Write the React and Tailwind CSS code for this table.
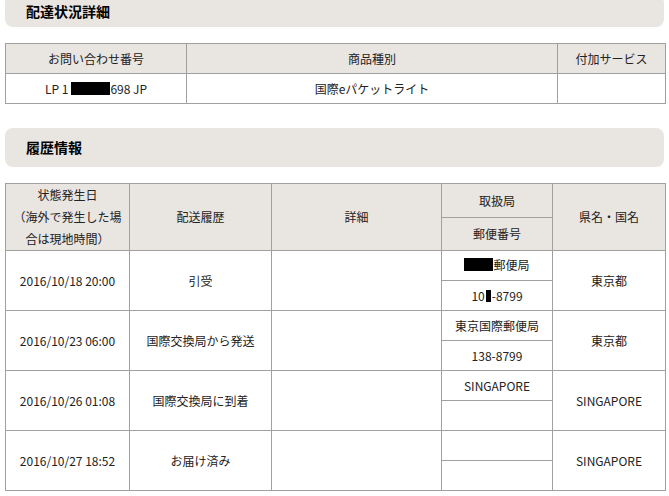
import React from 'react'

const FONT = { fontFamily: '"Noto Sans CJK JP", "Noto Sans", sans-serif' }

const HISTORY = [
  { date: '2016/10/18 20:00', status: '引受', office: 'redacted', zip: 'redacted', pref: '東京都' },
  { date: '2016/10/23 06:00', status: '国際交換局から発送', office: '東京国際郵便局', zip: '138-8799', pref: '東京都' },
  { date: '2016/10/26 01:08', status: '国際交換局に到着', office: 'SINGAPORE', zip: '', pref: 'SINGAPORE' },
  { date: '2016/10/27 18:52', status: 'お届け済み', office: '', zip: '', pref: 'SINGAPORE' },
]

function SectionTitle({ children, className = '' }) {
  return (
    <div className={`mx-[5px] rounded-[8px] bg-[#e9e5e1] flex items-center pl-[21px] text-[14px] font-bold text-black ${className}`}>
      {children}
    </div>
  )
}

const cell = 'border border-[#a0a0a0] text-center align-middle p-0'
const head = `${cell} bg-[#e9e5e1]`

function Office({ value }) {
  if (value === 'redacted') {
    return (
      <span className="inline-flex items-center">
        <span className="inline-block w-[29px] h-[13px] bg-black" />
        郵便局
      </span>
    )
  }
  return value
}

function Zip({ value }) {
  if (value === 'redacted') {
    return (
      <span className="inline-flex items-center">
        10<span className="inline-block w-[5px] h-[12px] bg-black mx-[1px]" />-8799
      </span>
    )
  }
  return value
}

export default function App() {
  return (
    <div className="w-[669px] h-[496px] overflow-hidden bg-white text-[12px] text-[#222]" style={FONT}>
      <SectionTitle className="-mt-[5px] h-[32px]">配達状況詳細</SectionTitle>

      {/* 配達状況詳細 */}
      <table className="mt-[16px] ml-[5px] border-collapse table-fixed w-[660px]">
        <colgroup>
          <col className="w-[181px]" />
          <col className="w-[371px]" />
          <col className="w-[108px]" />
        </colgroup>
        <tbody>
          <tr className="h-[30px]">
            <td className={head}>お問い合わせ番号</td>
            <td className={head}>商品種別</td>
            <td className={head}>付加サービス</td>
          </tr>
          <tr className="h-[30px]">
            <td className={cell}>
              <span className="inline-flex items-center">
                LP 1<span className="inline-block w-[39px] h-[13px] bg-black ml-[3px]" />698 JP
              </span>
            </td>
            <td className={cell}>国際eパケットライト</td>
            <td className={cell}></td>
          </tr>
        </tbody>
      </table>

      <SectionTitle className="mt-[24px] h-[39px]">履歴情報</SectionTitle>

      {/* 履歴情報 */}
      <table className="mt-[16px] ml-[5px] border-collapse table-fixed w-[660px]">
        <colgroup>
          <col className="w-[124px]" />
          <col className="w-[142px]" />
          <col className="w-[170px]" />
          <col className="w-[111px]" />
          <col className="w-[113px]" />
        </colgroup>
        <tbody>
          <tr className="h-[34px]">
            <td className={`${head} leading-[22px]`} rowSpan={2}>
              状態発生日<br />（海外で発生した場<br />合は現地時間）
            </td>
            <td className={head} rowSpan={2}>配送履歴</td>
            <td className={head} rowSpan={2}>詳細</td>
            <td className={head}>取扱局</td>
            <td className={head} rowSpan={2}>県名・国名</td>
          </tr>
          <tr className="h-[33px]">
            <td className={head}>郵便番号</td>
          </tr>
          {HISTORY.map((h) => (
            <React.Fragment key={h.date}>
              <tr className="h-[30px]">
                <td className={cell} rowSpan={2}>{h.date}</td>
                <td className={cell} rowSpan={2}>{h.status}</td>
                <td className={cell} rowSpan={2}></td>
                <td className={cell}><Office value={h.office} /></td>
                <td className={cell} rowSpan={2}>{h.pref}</td>
              </tr>
              <tr className="h-[30px]">
                <td className={cell}><Zip value={h.zip} /></td>
              </tr>
            </React.Fragment>
          ))}
        </tbody>
      </table>
    </div>
  )
}
